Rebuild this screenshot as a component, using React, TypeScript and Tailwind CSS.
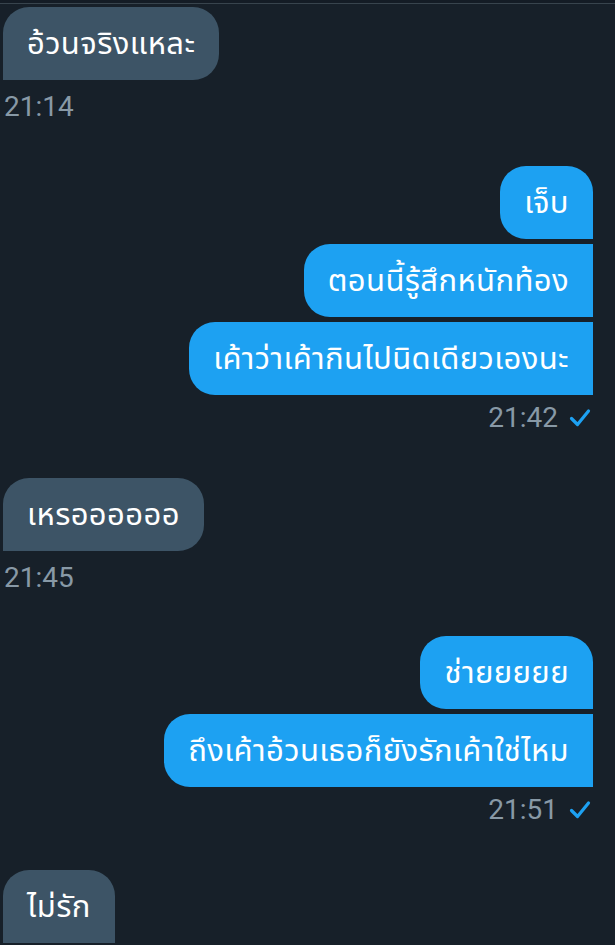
import React from 'react';

type Msg = { text: string; corners: string };

function Check() {
  return (
    <svg width="22" height="20" viewBox="0 0 22 20" className="shrink-0">
      <path d="M2.5 10.5 L8.5 16.5 L19.5 3" fill="none" stroke="#1da1f2" strokeWidth="3.2" strokeLinecap="round" strokeLinejoin="round" />
    </svg>
  );
}

function Bubble({ text, corners, sent }: Msg & { sent?: boolean }) {
  return (
    <div
      className={
        'flex h-[73px] items-center px-6 text-[31px] tracking-[0.4px] text-white ' +
        (sent ? 'bg-[#1da1f2] ' : 'bg-[#3d5466] ') +
        corners
      }
    >
      <span className="leading-none">{text}</span>
    </div>
  );
}

function Received({ msgs, time }: { msgs: Msg[]; time?: string }) {
  return (
    <div className="flex flex-col items-start gap-[5px]">
      {msgs.map((m) => (
        <Bubble key={m.text} {...m} />
      ))}
      {time && (
        <div className="mt-[4px] pl-[1px] text-[28px] leading-[36px] text-[#8899a6]">{time}</div>
      )}
    </div>
  );
}

function Sent({ msgs, time }: { msgs: Msg[]; time: string }) {
  return (
    <div className="flex flex-col items-end gap-[5px]">
      {msgs.map((m) => (
        <Bubble key={m.text} {...m} sent />
      ))}
      <div className="flex items-center gap-[11px] pr-[2px] text-[28px] leading-[36px] text-[#8899a6]">
        <span>{time}</span>
        <Check />
      </div>
    </div>
  );
}

export default function App() {
  return (
    <div
      className="h-[945px] w-[615px] overflow-hidden bg-[#172029]"
      style={{ fontFamily: 'Roboto, "Noto Sans", "Noto Sans Thai", "DejaVu Sans", sans-serif' }}
    >
      <div className="h-[4px] border-b border-[#38444d] bg-[#141c25]" />
      <div className="flex flex-col pl-[3px] pr-[22px] pt-[3px]">
        <Received msgs={[{ text: 'อ้วนจริงแหละ', corners: 'rounded-[26px] rounded-bl-none' }]} time="21:14" />
        <div className="mt-[41px]">
          <Sent
            msgs={[
              { text: 'เจ็บ', corners: 'rounded-[26px] rounded-br-none' },
              { text: 'ตอนนี้รู้สึกหนักท้อง', corners: 'rounded-l-[26px]' },
              { text: 'เค้าว่าเค้ากินไปนิดเดียวเองนะ', corners: 'rounded-l-[26px]' },
            ]}
            time="21:42"
          />
        </div>
        <div className="mt-[42px]">
          <Received msgs={[{ text: 'เหรออออออ', corners: 'rounded-[26px] rounded-bl-none' }]} time="21:45" />
        </div>
        <div className="mt-[40px]">
          <Sent
            msgs={[
              { text: 'ช่ายยยยย', corners: 'rounded-[26px] rounded-br-none' },
              { text: 'ถึงเค้าอ้วนเธอก็ยังรักเค้าใช่ไหม', corners: 'rounded-l-[26px]' },
            ]}
            time="21:51"
          />
        </div>
        <div className="mt-[42px]">
          <Received msgs={[{ text: 'ไม่รัก', corners: 'rounded-t-[26px]' }]} />
        </div>
      </div>
    </div>
  );
}
